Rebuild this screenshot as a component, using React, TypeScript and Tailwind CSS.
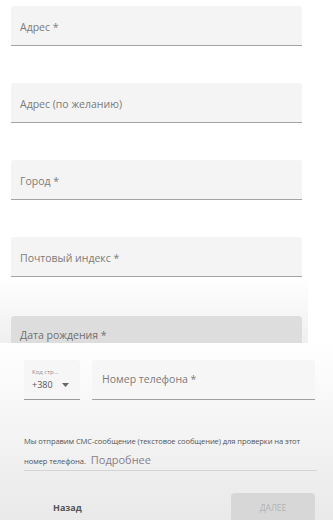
import React from "react";

const Field = ({ label }: { label: string }) => (
  <div className="h-[40px] bg-[#f4f4f4] border-b border-[#a3a3a3] rounded-t-[3px] flex items-center px-[9px] pt-[5px]">
    <p className="text-[10.5px] text-[#7b7b7b]">{label}</p>
  </div>
);

export default function App() {
  return (
    <div
      className="w-[333px] h-[520px] overflow-hidden bg-white"
      style={{ fontFamily: "'Open Sans', 'Noto Sans', sans-serif" }}
    >
      <div className="w-[308px] pl-[11px] pr-[6px] pt-[6px] flex flex-col gap-[37px]">
        <Field label="Адрес *" />
        <Field label="Адрес (по желанию)" />
        <Field label="Город *" />
        <Field label="Почтовый индекс *" />
      </div>

      <div className="w-[308px] h-[66px] bg-gradient-to-b from-white to-[#efefef] pl-[11px] pr-[6px] flex flex-col justify-end">
        <div className="h-[27px] bg-[#dddddd] rounded-t-[4px] px-[9px] pt-[14px]">
          <p className="text-[10.5px] text-[#6f6f6f] leading-none">Дата рождения *</p>
        </div>
      </div>

      <div className="h-[177px] bg-gradient-to-b from-white to-[#e9e9e9] pl-[24px] pr-[18px] pt-[17px] flex flex-col">
        <div className="flex gap-[12px]">
          <div className="w-[56px] shrink-0 h-[40px] bg-[#f6f6f6] border-b border-[#9a9a9a] rounded-t-[3px] px-[8px] pt-[9px]">
            <p className="text-[6px] text-[#8a8a8a] leading-none">Код стр...</p>
            <div className="flex items-center gap-[9px] mt-[5px]">
              <span className="text-[9px] text-[#555] leading-none">+380</span>
              <svg width="7" height="4" viewBox="0 0 7 4">
                <path d="M0 0 L7 0 L3.5 4 Z" fill="#666" />
              </svg>
            </div>
          </div>
          <div className="flex-1 h-[40px] bg-[#f6f6f6] border-b border-[#a0a0a0] rounded-t-[3px] flex items-center px-[10px]">
            <p className="text-[10.5px] text-[#7b7b7b]">Номер телефона *</p>
          </div>
        </div>

        <div className="mt-[36px] w-[293px] border-b border-[#d4d4d4] pb-[3px] flex flex-col gap-[7px]">
          <p className="text-[7.6px] text-[#555] leading-[10px] tracking-[-0.1px] whitespace-nowrap">
            Мы отправим СМС-сообщение (текстовое сообщение) для проверки на этот
          </p>
          <div className="flex items-baseline gap-[5px]">
            <span className="text-[7.6px] text-[#555] leading-[10px] tracking-[-0.1px]">номер телефона.</span>
            <span className="text-[11px] leading-[14px] text-[#8a7d89]">Подробнее</span>
          </div>
        </div>

        <div className="flex items-start justify-between mt-[22px]">
          <span className="ml-[29px] mt-[9px] text-[9px] leading-[12px] font-bold text-[#555]">Назад</span>
          <div className="w-[84px] h-[30px] bg-[#d7d7d7] rounded-t-[4px] flex justify-center pt-[9px]">
            <span className="text-[8.5px] leading-[12px] text-[#b3b3b3]">ДАЛЕЕ</span>
          </div>
        </div>
      </div>
    </div>
  );
}
